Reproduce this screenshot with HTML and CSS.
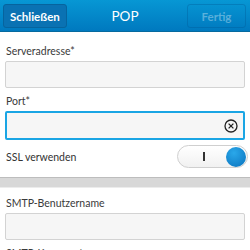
FILE: index.html
```html
<!DOCTYPE html>
<html lang="de">
<head>
  <meta charset="UTF-8" />
  <title>POP</title>
  <link rel="stylesheet" href="styles.css">
</head>
<body>
  <header class="titlebar">
    <button class="tb-btn">Schließen</button>
    <h1>POP</h1>
    <button class="tb-btn disabled">Fertig</button>
  </header>

  <main>
    <div class="field first">
      <label>Serveradresse*</label>
      <div class="input"></div>
    </div>
    <div class="field">
      <label>Port*</label>
      <div class="input focused">
        <svg class="clear" width="14" height="14" viewBox="0 0 14 14">
          <circle cx="7" cy="7" r="6" fill="none" stroke="#222" stroke-width="1.3"/>
          <path d="M4.6 4.6 L9.4 9.4 M9.4 4.6 L4.6 9.4" stroke="#222" stroke-width="1.3"/>
        </svg>
      </div>
    </div>
    <div class="toggle-row">
      <span>SSL verwenden</span>
      <div class="toggle">
        <span class="bar"></span>
        <span class="knob"></span>
      </div>
    </div>

    <div class="divider"></div>

    <div class="field after-divider">
      <label>SMTP-Benutzername</label>
      <div class="input"></div>
    </div>
    <div class="field">
      <label>SMTP-Kennwort</label>
      <div class="input"></div>
    </div>
  </main>
</body>
</html>
```

FILE: styles.css
```css
body {
  margin: 0;
  font-family: "Lato", "Open Sans", sans-serif;
  background: #fff;
  color: #333;
  overflow: hidden;
}

.titlebar {
  height: 32px;
  box-sizing: border-box;
  display: flex;
  align-items: center;
  justify-content: space-between;
  padding: 0 4px 0 3px;
  background: linear-gradient(to bottom, #0797d4, #0079bf);
  border-bottom: 1px solid #066a9f;
  position: relative;
}

.titlebar h1 {
  position: absolute;
  left: 0;
  right: 0;
  text-align: center;
  margin: 0;
  font-size: 13.5px;
  font-weight: normal;
  color: #fff;
  pointer-events: none;
}

.tb-btn {
  height: 24px;
  margin-top: 1px;
  padding: 0 6px;
  min-width: 59px;
  border: 1px solid #06649e;
  border-radius: 3px;
  background: #0a72b3;
  color: #fff;
  font-family: inherit;
  font-size: 11.5px;
  font-weight: bold;
}

.tb-btn.disabled {
  background: transparent;
  border-color: rgba(0, 90, 150, 0.35);
  color: rgba(255, 255, 255, 0.35);
}

main {
  padding: 0 5px 0 5px;
}

.field label {
  display: block;
  font-size: 10.5px;
  color: #3a3a3a;
  padding: 7px 1px 3px;
  line-height: 13px;
}

.field.first label {
  padding-top: 13px;
}

.field.after-divider label {
  padding-top: 9px;
}

.input {
  height: 27px;
  box-sizing: border-box;
  border: 1px solid #d3d3d3;
  border-radius: 2px;
  background: #f6f6f6;
  display: flex;
  align-items: center;
  justify-content: flex-end;
  padding-right: 5px;
}

.input.focused {
  height: 29px;
  border: 2px solid #1aa5e4;
}

.toggle-row {
  display: flex;
  align-items: center;
  justify-content: space-between;
  margin-top: 5px;
  height: 23px;
  font-size: 10.5px;
  color: #333;
  padding-left: 1px;
  margin-right: -3px;
}

.toggle {
  width: 71px;
  height: 23px;
  box-sizing: border-box;
  border: 1px solid #cfcfcf;
  border-radius: 12px;
  background: linear-gradient(to bottom, #ffffff, #f1f1f1);
  display: flex;
  align-items: center;
  justify-content: flex-end;
  padding-right: 1px;
  gap: 21px;
}

.toggle .bar {
  width: 2px;
  height: 9px;
  background: #333;
}

.toggle .knob {
  width: 20px;
  height: 20px;
  border-radius: 50%;
  background: radial-gradient(circle at 40% 30%, #2aa8ea, #0a72bd);
}

.divider {
  margin: 9px -5px 0;
  height: 9px;
  background: #d8d8d8;
  border-top: 1px solid #bdbdbd;
  border-bottom: 1px solid #ececec;
}
```
